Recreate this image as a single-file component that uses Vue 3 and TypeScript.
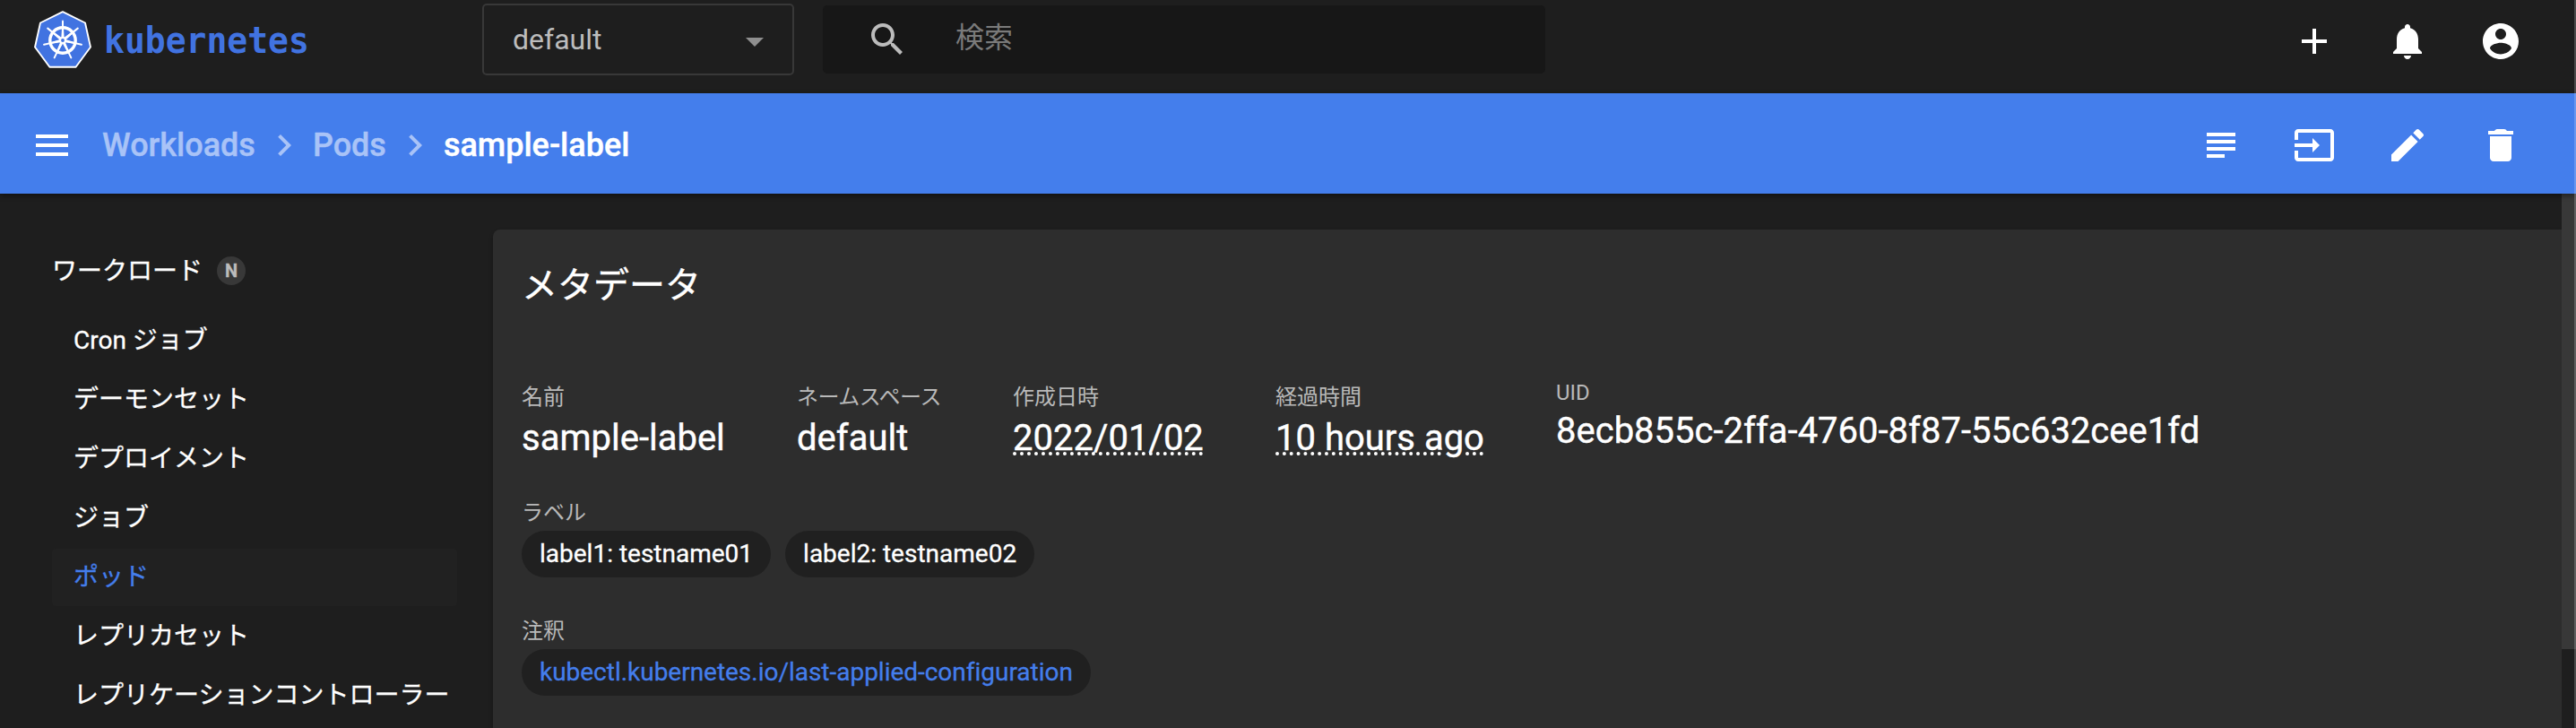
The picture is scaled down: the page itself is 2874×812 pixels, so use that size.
<script setup lang="ts">
interface IconAction { name: string; path: string }
interface Field { label: string; value: string; kind: string }

const navActions: IconAction[] = [
  { name: 'create', path: 'M19 13h-6v6h-2v-6H5v-2h6V5h2v6h6v2z' },
  { name: 'notifications', path: 'M12 22c1.1 0 2-.9 2-2h-4c0 1.1.89 2 2 2zm6-6v-5c0-3.07-1.64-5.64-4.5-6.32V4c0-.83-.67-1.5-1.5-1.5s-1.5.67-1.5 1.5v.68C7.63 5.36 6 7.92 6 11v5l-2 2v1h16v-1l-2-2z' },
  { name: 'account', path: 'M12 2C6.48 2 2 6.48 2 12s4.48 10 10 10 10-4.48 10-10S17.52 2 12 2zm0 3c1.66 0 3 1.34 3 3s-1.34 3-3 3-3-1.34-3-3 1.34-3 3-3zm0 14.2c-2.5 0-4.71-1.28-6-3.22.03-1.99 4-3.08 6-3.08 1.99 0 5.97 1.09 6 3.08-1.29 1.94-3.5 3.22-6 3.22z' },
]
const podActions: IconAction[] = [
  { name: 'logs', path: 'M14 17H4v2h10v-2zm6-8H4v2h16V9zM4 15h16v-2H4v2zM4 5v2h16V5H4z' },
  { name: 'exec', path: 'M21 3H3c-1.1 0-2 .9-2 2v4h2V5h18v14H3v-4H1v4c0 1.1.9 2 2 2h18c1.1 0 2-.9 2-2V5c0-1.1-.9-2-2-2zM11 16l4-4-4-4v3H1v2h10v3z' },
  { name: 'edit', path: 'M3 17.25V21h3.75L17.81 9.94l-3.75-3.75L3 17.25zM20.71 7.04c.39-.39.39-1.02 0-1.41l-2.34-2.34c-.39-.39-1.02-.39-1.41 0l-1.83 1.83 3.75 3.75 1.83-1.83z' },
  { name: 'delete', path: 'M6 19c0 1.1.9 2 2 2h8c1.1 0 2-.9 2-2V7H6v12zM19 4h-3.5c-.6-.7-1-1-2-1h-3c-1 0-1.4.3-2 1H5v2h14V4z' },
]
const crumbs: string[] = ['Workloads', 'Pods', 'sample-label']
const items: string[] = ['Cron ジョブ', 'デーモンセット', 'デプロイメント', 'ジョブ', 'ポッド', 'レプリカセット', 'レプリケーションコントローラー']
const activeItem = 'ポッド'
const fields: Field[] = [
  { label: '名前', value: 'sample-label', kind: 'name' },
  { label: 'ネームスペース', value: 'default', kind: 'namespace' },
  { label: '作成日時', value: '2022/01/02', kind: 'created dotted' },
  { label: '経過時間', value: '10 hours ago', kind: 'age dotted' },
  { label: 'UID', value: '8ecb855c-2ffa-4760-8f87-55c632cee1fd', kind: 'uid' },
]
const labels: string[] = ['label1: testname01', 'label2: testname02']
const spokes: number[] = Array.from({ length: 7 }, (_, i) => (i * 360) / 7)
</script>

<template>
  <div class="app">
    <header class="navbar">
      <div class="brand">
        <svg class="logo" width="64" height="64" viewBox="0 0 64 64">
          <path d="M32 1.2L57 13.5 63 40.5 46.6 62.8H17.4L1 40.5 7 13.5Z" fill="#4173e1" stroke="#fff" stroke-width="1.9" stroke-linejoin="round" />
          <g stroke="#fff" fill="none">
            <circle cx="32" cy="33" r="14.2" stroke-width="3.4" />
            <g v-for="a in spokes" :key="a" :transform="`rotate(${a} 32 33)`">
              <path d="M32 28V11.5" stroke-width="2" stroke-linecap="round" />
              <path d="M31 20L30.4 30H33.6L33 20Z" fill="#fff" stroke="none" />
            </g>
            <circle cx="32" cy="33" r="4" fill="#fff" stroke="none" />
            <circle cx="32" cy="33" r="1.9" fill="#4173e1" stroke="none" />
          </g>
        </svg>
        <span class="wordmark">kubernetes</span>
      </div>
      <div class="namespace-select">
        <span>default</span>
        <svg width="20" height="10" viewBox="0 0 20 10"><path d="M0 0h20L10 10z" fill="#8f8f8f" /></svg>
      </div>
      <div class="search">
        <svg width="48" height="48" viewBox="0 0 24 24" fill="#bcbcbc"><path d="M15.5 14h-.79l-.28-.27C15.41 12.59 16 11.11 16 9.5 16 5.91 13.09 3 9.5 3S3 5.91 3 9.5 5.91 16 9.5 16c1.61 0 3.09-.59 4.23-1.57l.27.28v.79l5 4.99L20.49 19l-4.99-5zm-6 0C7.01 14 5 11.99 5 9.5S7.01 5 9.5 5 14 7.01 14 9.5 11.99 14 9.5 14z" /></svg>
        <span>検索</span>
      </div>
      <div class="actions">
        <svg v-for="a in navActions" :key="a.name" width="48" height="48" viewBox="0 0 24 24" fill="#fff"><path :d="a.path" /></svg>
      </div>
    </header>

    <div class="actionbar">
      <svg class="menu" width="48" height="48" viewBox="0 0 24 24" fill="#fff"><path d="M3 18h18v-2H3v2zm0-5h18v-2H3v2zm0-7v2h18V6H3z" /></svg>
      <nav class="crumbs">
        <template v-for="(c, i) in crumbs" :key="c">
          <svg v-if="i > 0" width="48" height="48" viewBox="0 0 24 24" fill="#a9c3f7"><path d="M10 6L8.59 7.41 13.17 12l-4.58 4.59L10 18l6-6z" /></svg>
          <span class="crumb" :class="{ current: i === crumbs.length - 1 }">{{ c }}</span>
        </template>
      </nav>
      <div class="actions">
        <svg v-for="a in podActions" :key="a.name" width="48" height="48" viewBox="0 0 24 24" fill="#fff"><path :d="a.path" /></svg>
      </div>
    </div>

    <div class="body">
      <aside class="sidebar">
        <div class="group"><span class="group-name">ワークロード</span><span class="badge">N</span></div>
        <div v-for="item in items" :key="item" class="item" :class="{ active: item === activeItem }">{{ item }}</div>
      </aside>
      <main class="card">
        <h1>メタデータ</h1>
        <div class="fields">
          <div v-for="f in fields" :key="f.label" class="field" :class="f.kind">
            <div class="label">{{ f.label }}</div>
            <div class="value"><span>{{ f.value }}</span></div>
          </div>
        </div>
        <div class="label">ラベル</div>
        <div class="chips"><span v-for="l in labels" :key="l" class="chip">{{ l }}</span></div>
        <div class="label">注釈</div>
        <div class="chips"><span class="chip link">kubectl.kubernetes.io/last-applied-configuration</span></div>
      </main>
      <div class="scroll"><div class="thumb"></div></div>
    </div>
    <div class="edge"></div>
  </div>
</template>

<style>
body { margin: 0; background: #1e1e1e; overflow: hidden; }
</style>

<style scoped>
.app {
  position: relative; width: 2874px; height: 812px; overflow: hidden;
  display: flex; flex-direction: column; background: #1e1e1e; color: #fff;
  font-family: Roboto, "Noto Sans CJK JP", sans-serif;
}
.app svg { display: block; flex: none; }
.navbar { height: 104px; flex: none; display: flex; align-items: flex-start; box-sizing: border-box; padding-right: 60px; }
.brand { width: 538px; flex: none; display: flex; padding: 12px 0 0 38px; box-sizing: border-box; }
.wordmark {
  margin: 1px 0 0 14px; font: 700 38px/64px "DejaVu Sans Mono", monospace; color: #4173e1;
  transform: scaleY(1.08);
}
.namespace-select {
  width: 348px; height: 80px; margin-top: 4px; flex: none; box-sizing: border-box;
  border: 2px solid #383838; border-radius: 5px; padding: 0 32px;
  display: flex; align-items: center; justify-content: space-between;
  font-size: 32px; color: #bcbcbc;
}
.namespace-select svg { margin-top: 6px; }
.search {
  width: 806px; height: 76px; margin: 6px 0 0 32px; flex: none; box-sizing: border-box;
  background: #171717; border-radius: 5px; padding: 14px 0 0 48px;
  display: flex; gap: 52px; font-size: 32px; line-height: 45px; color: #7a7a7a;
}
.actions { display: flex; gap: 56px; margin-left: auto; }
.navbar .actions { margin-top: 22px; }
.actionbar {
  height: 112px; flex: none; box-sizing: border-box; padding: 4px 60px 0 34px; z-index: 1;
  display: flex; align-items: center; background: #447eec;
  box-shadow: 0 2px 6px rgba(0, 0, 0, .45);
}
.crumbs { display: flex; align-items: center; gap: 8px; margin-left: 32px; }
.crumb { font-size: 36px; line-height: 48px; font-weight: 500; color: #a9c3f7; -webkit-text-stroke: .4px currentColor; }
.crumb.current { color: #fff; }
.body { flex: 1; min-height: 0; display: flex; }
.sidebar { width: 550px; flex: none; box-sizing: border-box; padding: 52px 40px 0 58px; font-size: 28px; -webkit-text-stroke: .3px currentColor; }
.group { display: flex; align-items: center; height: 68px; margin-bottom: 12px; }
.group-name { margin-bottom: 4px; }
.badge {
  width: 32px; height: 32px; border-radius: 50%; background: #383838; color: #bcbcbc;
  margin-left: 16px; font-size: 20px; line-height: 33px; font-weight: 700; text-align: center;
}
.item { height: 64px; line-height: 64px; margin-bottom: 2px; padding-left: 24px; border-radius: 4px; white-space: nowrap; }
.item.active { background: #212121; color: #447eec; }
.card {
  flex: 1; margin-top: 40px; padding: 32px; box-sizing: border-box; background: #2d2d2d;
  border-radius: 8px 0 0 0; box-shadow: 0 2px 4px rgba(0, 0, 0, .3);
}
h1 { margin: 0; height: 60px; font-size: 40px; line-height: 62px; font-weight: 400; -webkit-text-stroke: .4px currentColor; }
.fields { display: flex; height: 152px; padding-top: 77px; box-sizing: border-box; margin-bottom: 54px; }
.label { font-size: 24px; line-height: 36px; height: 36px; color: #b9b9b9; white-space: nowrap; }
.value { font-size: 40px; line-height: 48px; white-space: nowrap; margin-top: 4px; -webkit-text-stroke: .4px currentColor; }
.field { flex: none; }
.name { width: 307px; }
.namespace { width: 241px; }
.namespace .label { letter-spacing: -.5px; }
.created { width: 293px; }
.age { width: 313px; }
.dotted .value span { text-decoration: underline dotted 4px; text-underline-offset: 2px; }
.uid { margin-top: -5px; }
.uid .value { margin-top: 1px; }
.chips { display: flex; gap: 16px; margin: 2px 0 42px; }
.chip { height: 52px; line-height: 52px; border-radius: 26px; padding: 0 20px; background: #202020; font-size: 28px; white-space: nowrap; -webkit-text-stroke: .3px currentColor; }
.link { color: #447eec; letter-spacing: -.02px; }
.scroll { width: 16px; flex: none; background: #1e1e1e; }
.thumb { height: 508px; background: #383838; }
.edge { position: absolute; top: 0; right: 0; width: 2px; height: 812px; background: rgba(255, 255, 255, .2); z-index: 2; }
</style>
